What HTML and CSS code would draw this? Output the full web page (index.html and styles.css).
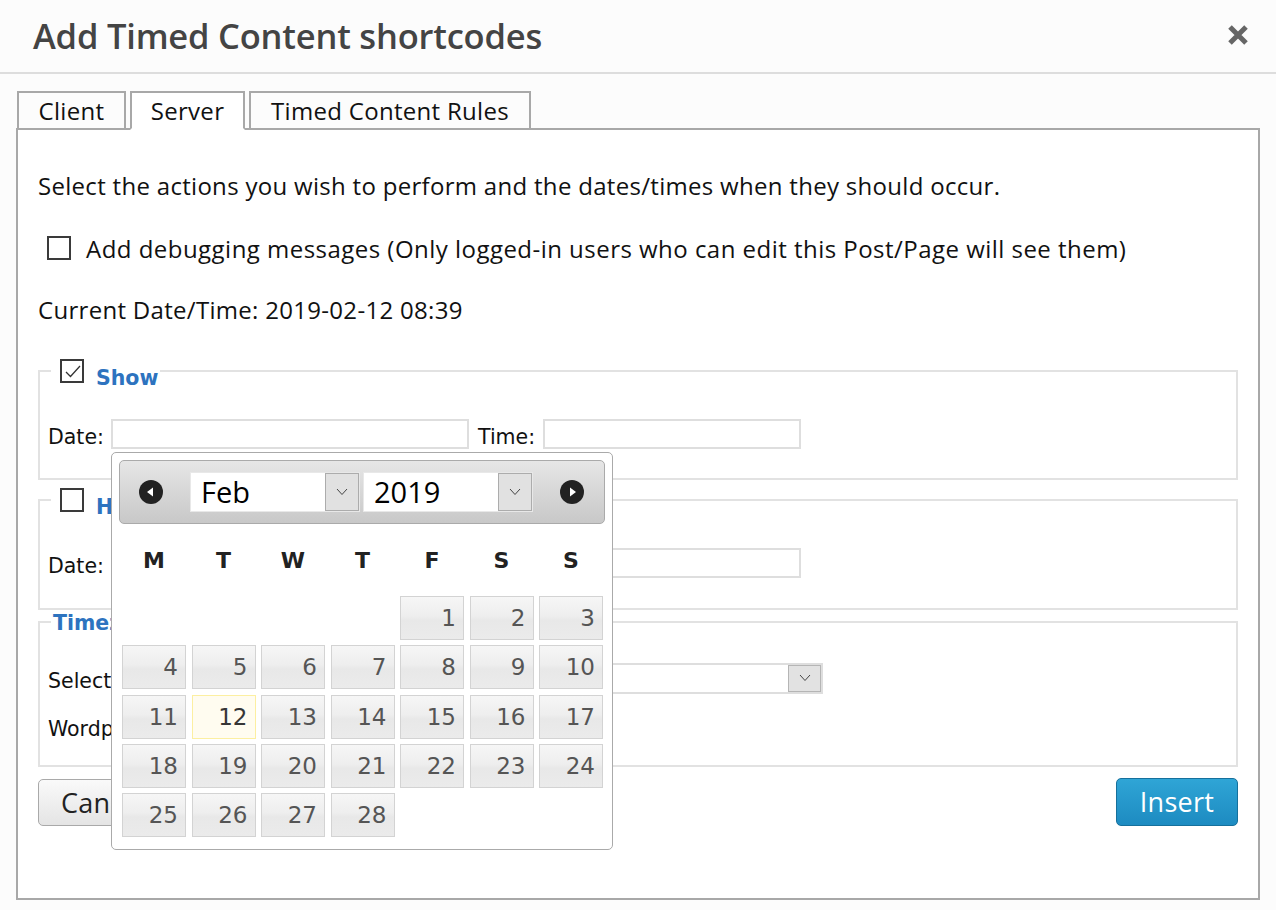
FILE: index.html
```html
<!DOCTYPE html>
<html>
<head>
<meta charset="utf-8">
<link rel="stylesheet" href="styles.css">
</head>
<body>
<div class="header">
  <h1 class="title">Add Timed Content shortcodes</h1>
  <svg class="close" width="22" height="22" viewBox="0 0 22 22"><path d="M3 3 L19 19 M19 3 L3 19" stroke="#666" stroke-width="5" stroke-linecap="butt"/></svg>
</div>
<div class="tabs">
  <div class="tab tab-client">Client</div>
  <div class="tab tab-server active">Server</div>
  <div class="tab tab-rules">Timed Content Rules</div>
</div>
<div class="panel">
  <p class="intro">Select the actions you wish to perform and the dates/times when they should occur.</p>
  <div class="row-check">
    <span class="cb"></span>
    <span class="cb-label">Add debugging messages (Only logged-in users who can edit this Post/Page will see them)</span>
  </div>
  <p class="current">Current Date/Time: 2019-02-12 08:39</p>

  <fieldset class="fs fs-show">
    <legend class="lg"><span class="cb cb-checked"><svg width="22" height="22" viewBox="0 0 22 22"><path d="M4 11 L8.5 15.5 L18 5" fill="none" stroke="#333" stroke-width="1.3"/></svg></span><span class="lg-text">Show</span></legend>
    <div class="frow">
      <span class="flabel">Date:</span><span class="inp inp-date"></span>
      <span class="flabel flabel-time">Time:</span><span class="inp inp-time"></span>
    </div>
  </fieldset>

  <fieldset class="fs fs-hide">
    <legend class="lg"><span class="cb"></span><span class="lg-text">Hide</span></legend>
    <div class="frow">
      <span class="flabel">Date:</span><span class="inp inp-date"></span>
      <span class="flabel flabel-time">Time:</span><span class="inp inp-time"></span>
    </div>
  </fieldset>

  <fieldset class="fs fs-tz">
    <legend class="lg lg-tz"><span class="lg-text">Timezone</span></legend>
    <div class="frow">
      <span class="flabel flabel-tz">Select Timezone:</span>
      <span class="sel-tz"><span class="sel-btn"><svg width="12" height="8" viewBox="0 0 12 8"><path d="M1 1 L6 6.5 L11 1" fill="none" stroke="#444" stroke-width="1"/></svg></span></span>
    </div>
    <div class="frow frow-2">
      <span class="flabel">Wordpress Timezone: UTC</span>
    </div>
  </fieldset>

  <div class="buttons">
    <button class="btn btn-cancel">Cancel</button>
    <button class="btn btn-insert">Insert</button>
  </div>
</div>

<div class="datepicker">
  <div class="dp-header">
    <svg class="nav nav-prev" width="24" height="24" viewBox="0 0 24 24"><circle cx="12" cy="12" r="12" fill="#222"/><path d="M8 12 L14 7.5 L14 16.5 Z" fill="#fff"/></svg>
    <div class="dp-sel dp-month"><span class="dp-sel-text">Feb</span><span class="dp-sel-btn"><svg width="12" height="8" viewBox="0 0 12 8"><path d="M1 1 L6 6.5 L11 1" fill="none" stroke="#444" stroke-width="1"/></svg></span></div>
    <div class="dp-sel dp-year"><span class="dp-sel-text">2019</span><span class="dp-sel-btn"><svg width="12" height="8" viewBox="0 0 12 8"><path d="M1 1 L6 6.5 L11 1" fill="none" stroke="#444" stroke-width="1"/></svg></span></div>
    <svg class="nav nav-next" width="24" height="24" viewBox="0 0 24 24"><circle cx="12" cy="12" r="12" fill="#222"/><path d="M16 12 L10 7.5 L10 16.5 Z" fill="#fff"/></svg>
  </div>
  <div class="dp-names">
    <span>M</span><span>T</span><span>W</span><span>T</span><span>F</span><span>S</span><span>S</span>
  </div>
  <div class="dp-days">
    <span class="empty"></span><span class="empty"></span><span class="empty"></span><span class="empty"></span>
    <span class="day">1</span><span class="day">2</span><span class="day">3</span>
    <span class="day">4</span><span class="day">5</span><span class="day">6</span><span class="day">7</span><span class="day">8</span><span class="day">9</span><span class="day">10</span>
    <span class="day">11</span><span class="day today">12</span><span class="day">13</span><span class="day">14</span><span class="day">15</span><span class="day">16</span><span class="day">17</span>
    <span class="day">18</span><span class="day">19</span><span class="day">20</span><span class="day">21</span><span class="day">22</span><span class="day">23</span><span class="day">24</span>
    <span class="day">25</span><span class="day">26</span><span class="day">27</span><span class="day">28</span>
  </div>
</div>
</body>
</html>
```
FILE: styles.css
```css
* { box-sizing: border-box; }
html, body { margin: 0; padding: 0; }
body {
  background: #fcfcfc;
  font-family: "Open Sans", "Noto Sans", sans-serif;
  color: #111;
  width: 1276px;
  height: 910px;
  overflow: hidden;
}
.header {
  height: 74px;
  border-bottom: 2px solid #dddddd;
  display: flex;
  align-items: center;
  justify-content: space-between;
  padding: 0 27px 0 33px;
}
.title {
  margin: 0;
  font-size: 34.5px;
  font-weight: 600;
  color: #444;
  line-height: 74px;
  letter-spacing: -0.2px;
}
.close { display: block; margin-top: -2px; }

.tabs {
  display: flex;
  gap: 4px;
  margin: 17px 0 -2px 17px;
}
.tab {
  position: relative;
  z-index: 1;
  height: 39px;
  border: 2px solid #a8a8a8;
  font-size: 24px;
  letter-spacing: 0.3px;
  line-height: 35px;
  color: #111;
  background: #fcfcfc;
  text-align: center;
}
.tab-client { width: 109px; }
.tab-server { width: 115px; }
.tab-rules { width: 282px; }
.tab.active {
  background: #fff;
  border-bottom-color: #fff;
}
.panel {
  margin: 0 16px;
  height: 772px;
  border: 2px solid #a8a8a8;
  background: #fff;
  padding: 41px 20px 0 20px;
}
.intro, .cb-label, .current {
  font-size: 24px;
  letter-spacing: 0.3px;
}
.cb-label { letter-spacing: 0.47px; }
.intro {
  margin: 0;
  line-height: 30px;
}
.row-check {
  margin-top: 33px;
  height: 30px;
  display: flex;
  align-items: center;
}
.cb {
  display: inline-block;
  width: 24px;
  height: 24px;
  border: 2px solid #3a3a3a;
  background: #fff;
  flex: none;
}
.cb svg { display: block; }
.row-check .cb { margin-left: 9px; margin-top: -3px; }
.cb-label { margin-left: 15px; line-height: 30px; }
.current {
  margin: 31px 0 0;
  line-height: 30px;
}

.fs {
  margin: 34px 0 0;
  border: 2px solid #e2e2e2;
  padding: 36px 8px 29px;
  min-width: 0;
}
.fs-hide { margin-top: 8px; padding-bottom: 30px; }
.fs-tz { margin-top: 0; padding-top: 29px; padding-bottom: 24px; }
.lg {
  margin-left: 3px;
  padding: 0 2px;
  height: 24px;
  display: flex;
  align-items: flex-end;
}
.lg .cb { margin-left: 7px; align-self: center; }
.lg-text {
  font-family: "DejaVu Sans", Verdana, sans-serif;
  font-weight: bold;
  font-size: 20.5px;
  color: #2d73bf;
  margin-left: 12px;
  line-height: 18px;
  margin-bottom: -4px;
}
.lg-tz { align-items: flex-end; }
.lg-tz .lg-text { margin-left: 0; margin-bottom: -1px; line-height: 24px; }
.frow {
  display: flex;
  align-items: center;
  height: 30px;
}
.frow-2 { margin-top: 18px; }
.flabel {
  font-family: "DejaVu Sans", Verdana, sans-serif;
  font-size: 20.5px;
  line-height: 24px;
  padding-top: 5px;
  color: #111;
  width: 63px;
  flex: none;
  white-space: nowrap;
}
.frow-2 .flabel { width: auto; }
.flabel-time { margin-left: 9px; width: 65px; }
.flabel-tz { width: 230px; }
.inp {
  height: 30px;
  border: 2px solid #dedede;
  background: #fff;
  flex: none;
}
.inp-date { width: 358px; }
.inp-time { width: 258px; }
.sel-tz {
  width: 545px;
  height: 31px;
  border: 2px solid #dedede;
  background: #fff;
  display: flex;
  justify-content: flex-end;
  flex: none;
}
.sel-btn {
  width: 33px;
  height: 27px;
  background: #e2e2e2;
  border: 1px solid #b5b5b5;
  display: flex;
  align-items: center;
  justify-content: center;
}
.buttons {
  margin-top: 11px;
  display: flex;
  justify-content: space-between;
}
.btn {
  height: 48px;
  font-family: "Open Sans", "Noto Sans", sans-serif;
  font-size: 27px;
  letter-spacing: 0.3px;
  border-radius: 5px;
  padding: 0 22px;
  line-height: 44px;
}
.btn-cancel {
  border: 1px solid #a9a9a9;
  background: linear-gradient(#fafafa, #e4e4e4);
  color: #222;
  margin-top: 1px;
  height: 47px;
}
.btn-insert {
  width: 122px;
  border: 1px solid #16709c;
  background: linear-gradient(#2fa5d6, #1d8bc1);
  color: #fff;
  padding: 0;
}

/* datepicker */
.datepicker {
  position: absolute;
  left: 111px;
  top: 452px;
  width: 502px;
  border: 1px solid #aaaaaa;
  border-radius: 5px;
  background: #fff;
  padding: 7px 6px 12px 7px;
  font-family: "DejaVu Sans", Verdana, sans-serif;
}
.dp-header {
  width: 486px;
  height: 64px;
  border: 1px solid #aaaaaa;
  border-radius: 5px;
  background: linear-gradient(#e6e6e6, #c8c8c8);
  display: flex;
  align-items: center;
  padding-left: 19px;
}
.nav { display: block; flex: none; }
.dp-sel {
  width: 170px;
  height: 40px;
  background: #fff;
  border: 1px solid #e8e8e8;
  display: flex;
  align-items: stretch;
  justify-content: space-between;
  flex: none;
}
.dp-month { margin-left: 27px; }
.dp-year { margin-left: 3px; }
.nav-next { margin-left: 27px; }
.dp-sel-text {
  font-family: "Open Sans", "Noto Sans", sans-serif;
  font-size: 29px;
  line-height: 38px;
  padding-left: 10px;
  color: #000;
}
.dp-sel-btn {
  width: 34px;
  background: #e1e1e1;
  border: 1px solid #acacac;
  display: flex;
  align-items: center;
  justify-content: center;
}
.dp-names {
  margin-top: 22px;
  display: grid;
  grid-template-columns: repeat(7, 64px);
  column-gap: 5.5px;
  padding-left: 3px;
}
.dp-names span {
  text-align: center;
  font-weight: bold;
  font-size: 22px;
  line-height: 30px;
  color: #222;
}
.dp-days {
  margin-top: 20px;
  display: grid;
  grid-template-columns: repeat(7, 64px);
  grid-auto-rows: 44px;
  column-gap: 5.5px;
  row-gap: 5.25px;
  padding-left: 3px;
}
.day {
  border: 1px solid #d3d3d3;
  background: linear-gradient(#f6f6f6 0%, #eeeeee 45%, #e8e8e8 55%, #ebebeb 100%);
  color: #555;
  font-size: 23px;
  line-height: 42px;
  text-align: right;
  padding-right: 7px;
}
.day.today {
  border-color: #fcefa1;
  background: #fffcf0;
  color: #363636;
}
```
